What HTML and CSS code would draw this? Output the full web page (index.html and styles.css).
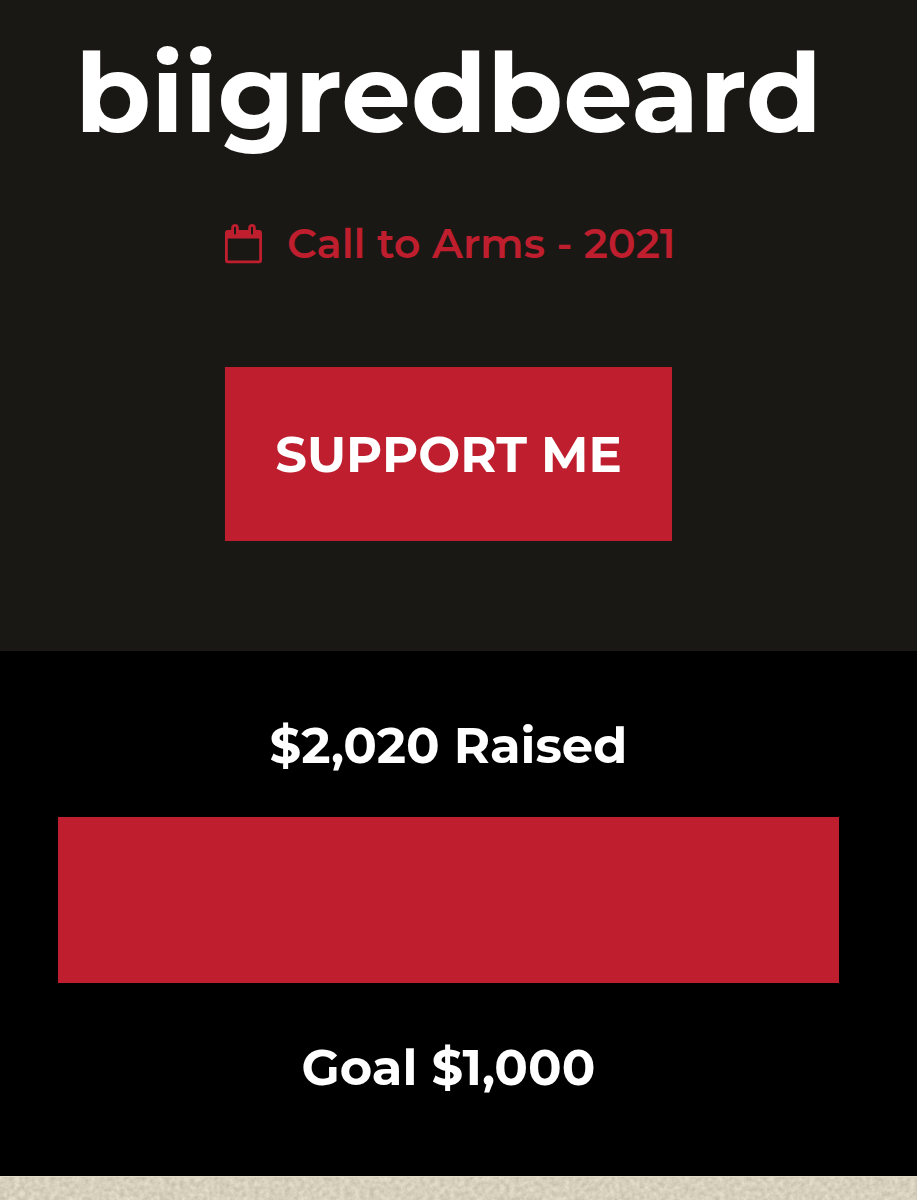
FILE: index.html
```html
<!DOCTYPE html>
<html lang="en">
<head>
  <meta charset="UTF-8" />
  <meta name="viewport" content="width=device-width, initial-scale=1.0"/>
  <title>biigredbeard - Call to Arms 2021</title>
  <link rel="stylesheet" href="styles.css">
</head>
<body>

<!-- Profile -->
<header class="profile">
  <h1 class="username">biigredbeard</h1>
  <a href="#" class="campaign">
    <svg class="calendar" viewBox="0 0 38 40" fill="none" stroke="currentColor" stroke-width="2.8">
      <rect x="1.4" y="7.4" width="34.2" height="30.4" rx="1.5"/>
      <path d="M1 7h35v7.5H1z" fill="currentColor" stroke="none"/>
      <rect class="ring" x="7.6" y="1.4" width="4.8" height="10.6" rx="2.4"/>
      <rect class="ring" x="24.6" y="1.4" width="4.8" height="10.6" rx="2.4"/>
    </svg>
    <span>Call to Arms - 2021</span>
  </a>
  <a href="#" class="support">SUPPORT ME</a>
</header>

<!-- Fundraising progress -->
<section class="progress">
  <p>$2,020 Raised</p>
  <div class="bar"></div>
  <p>Goal $1,000</p>
</section>

<!-- Paper texture -->
<div class="paper">
  <svg width="100%" height="100%">
    <filter id="grain" x="0" y="0" width="100%" height="100%" color-interpolation-filters="sRGB">
      <feTurbulence type="fractalNoise" baseFrequency="0.2" numOctaves="3" seed="4"/>
      <feColorMatrix values="0.19 0 0 0 0.745  0.19 0 0 0 0.72  0.2 0 0 0 0.64  0 0 0 0 1"/>
    </filter>
    <rect width="100%" height="100%" filter="url(#grain)"/>
  </svg>
</div>

</body>
</html>
```

FILE: styles.css
```css
* {
  margin: 0;
  padding: 0;
  box-sizing: border-box;
}

body {
  height: 1200px;
  font-family: "Montserrat", "Inter", sans-serif;
  color: #fff;
  background: #000;
  overflow: hidden;
}

a {
  color: inherit;
  text-decoration: none;
}

.profile {
  display: flex;
  flex-direction: column;
  align-items: center;
  height: 651px;
  padding: 23px 20px 0 0;
  background: #1a1814;
}

.username {
  font-size: 110.3px;
  line-height: 140px;
  font-weight: 700;
}

.campaign {
  display: flex;
  align-items: center;
  gap: 24px;
  width: 447px;
  margin-top: 50px;
  font-size: 41.4px;
  line-height: 60px;
  font-weight: 600;
  white-space: nowrap;
  color: #be1e2d;
}

.calendar {
  width: 38px;
  height: 40px;
  margin-top: 1px;
  flex: none;
}

.ring {
  fill: #1a1814;
}

.support {
  width: 447px;
  height: 174px;
  margin-top: 94px;
  font-size: 49.7px;
  line-height: 175px;
  font-weight: 700;
  text-align: center;
  background: #be1e2d;
}

.progress {
  height: 525px;
  padding: 64px 78px 0 58px;
  font-size: 49.6px;
  line-height: 60px;
  font-weight: 700;
  text-align: center;
}

.bar {
  height: 166px;
  margin: 42px 0 54px;
  background: #be1e2d;
}

.paper {
  height: 24px;
  background: #d9d2be;
  border-top: 1px solid #e2dbc6;
}

.paper svg {
  display: block;
}
```
